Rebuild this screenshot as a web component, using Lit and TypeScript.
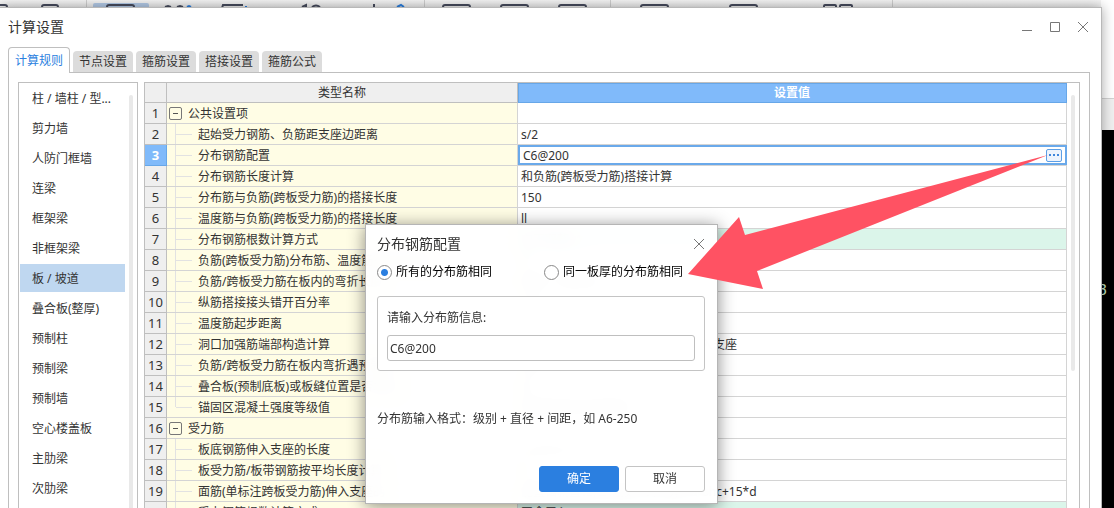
import { LitElement, html, css, svg } from "lit";
import { customElement } from "lit/decorators.js";
import { classMap } from "lit/directives/class-map.js";

type Row = { name: string; value?: string; group?: boolean; formula?: boolean; last?: boolean };

const TABS = ["计算规则", "节点设置", "箍筋设置", "搭接设置", "箍筋公式"];

const MEMBERS = [
  "柱 / 墙柱 / 型...", "剪力墙", "人防门框墙", "连梁", "框架梁", "非框架梁", "板 / 坡道",
  "叠合板(整厚)", "预制柱", "预制梁", "预制墙", "空心楼盖板", "主肋梁", "次肋梁",
];

const ROWS: Row[] = [
  { name: "公共设置项", group: true },
  { name: "起始受力钢筋、负筋距支座边距离", value: "s/2" },
  { name: "分布钢筋配置", value: "C6@200" },
  { name: "分布钢筋长度计算", value: "和负筋(跨板受力筋)搭接计算" },
  { name: "分布筋与负筋(跨板受力筋)的搭接长度", value: "150" },
  { name: "温度筋与负筋(跨板受力筋)的搭接长度", value: "ll" },
  { name: "分布钢筋根数计算方式", value: "向下取整+1", formula: true },
  { name: "负筋(跨板受力筋)分布筋、温度筋是否带弯勾", value: "否" },
  { name: "负筋/跨板受力筋在板内的弯折长度", value: "板厚-2*保护层" },
  { name: "纵筋搭接接头错开百分率", value: "50%" },
  { name: "温度筋起步距离", value: "s" },
  { name: "洞口加强筋端部构造计算", value: "平行于受力方向的洞口加强筋应伸入支座" },
  { name: "负筋/跨板受力筋在板内弯折遇预制板", value: "弯折" },
  { name: "叠合板(预制底板)或板缝位置是否增加", value: "是" },
  { name: "锚固区混凝土强度等级值", value: "取锚固区构件强度值", last: true },
  { name: "受力筋", group: true },
  { name: "板底钢筋伸入支座的长度", value: "max(ha/2,5*d)" },
  { name: "板受力筋/板带钢筋按平均长度计算", value: "否" },
  { name: "面筋(单标注跨板受力筋)伸入支座的", value: "能直锚就直锚,否则按公式计算:ha-bhc+15*d" },
  { name: "受力钢筋根数计算方式", value: "四舍五入+1", formula: true },
];

@customElement("app-root")
export class AppRoot extends LitElement {
  static styles = css`
    :host {
      display: block;
      position: relative;
      height: 100vh;
      overflow: hidden;
      background: #000;
      color: #333;
      font: 12px/20px "Noto Sans", "Noto Sans CJK SC", sans-serif;
    }
    * { box-sizing: border-box; }
    button, input { font: inherit; color: inherit; margin: 0; }
    .backdrop { position: absolute; inset: 0; display: flex; flex-direction: column; }
    .ribbon { height: 98px; background: linear-gradient(to right, transparent 1101px, #fff 1101px), linear-gradient(#f6f6f6, #eee 7px); }
    .ribbon svg { display: block; }
    .strip { height: 32px; border-top: 1px solid #d2d2d2; background: #f0f0f0; }
    .canvas { flex: 1; display: flex; justify-content: flex-end; align-items: center; padding: 0 7px 56px 0; color: #c4e4c4; font: 16px/20px "Liberation Mono", monospace; }
    .window {
      position: relative;
      height: calc(100vh - 7px + 40px);
      margin: 7px 12px 0 0;
      display: flex;
      flex-direction: column;
      background: #fff;
      border-top: 1px solid #b8b8b8;
      border-right: 1px solid #b8b8b8;
      box-shadow: 0 0 12px rgba(0, 0, 0, .35);
    }
    .titlebar { display: flex; justify-content: space-between; align-items: center; height: 38px; padding: 0 12px 0 8px; font-size: 14px; }
    h1, h2 { margin: 0; font-size: 14px; font-weight: 400; line-height: 20px; }
    .controls { display: flex; gap: 16px; }
    .icon { display: block; padding: 0; border: 0; background: none; width: 12px; height: 12px; }
    .icon svg { display: block; fill: none; stroke: #777; }
    .tabs { display: flex; align-items: flex-end; gap: 3px; height: 26px; padding-left: 8px; margin-top: 1px; position: relative; z-index: 1; margin-bottom: -1px; }
    .tab { height: 21px; width: 60px; margin-bottom: 1px; padding: 0; border: 0; border-radius: 4px 4px 0 0; background: #dcdcdc; line-height: 21px; white-space: nowrap; }
    .tab.active { width: 62px; height: 26px; margin-bottom: 0; border: 1px solid #bfbfbf; border-bottom: 0; background: #fff; color: #2b7fe0; }
    .panel { flex: 1; min-height: 0; display: flex; gap: 6px; margin: 0 11px 0 8px; padding: 9px 9px 0; border: 1px solid #bfbfbf; border-bottom: 0; }
    .members { width: 120px; display: flex; justify-content: space-between; border: 1px solid #bfbfbf; padding: 1px 4px 0 1px; }
    .list { list-style: none; margin: 0; padding: 0; width: 105px; }
    .list li { height: 28px; margin-bottom: 2px; padding-left: 12px; line-height: 30px; white-space: nowrap; }
    .list li.on { background: #bfd7f0; }
    .bar { width: 4px; margin-top: 11px; border-radius: 2px; background: #e9e9e9; }
    .bar.short { height: 276px; margin-top: 12px; }
    .grid { flex: 1; min-width: 0; display: flex; justify-content: space-between; align-items: flex-start; border: 1px solid #bfbfbf; padding-right: 4px; }
    table { width: calc(100% - 8px); border-collapse: separate; border-spacing: 0; table-layout: fixed; }
    .c-num { width: 22px; }
    .c-name { width: 351px; }
    th, td { height: 21px; padding: 0; border-right: 1px solid #d4d4d4; border-bottom: 1px solid #d4d4d4; font-weight: 400; line-height: 20px; overflow: hidden; white-space: nowrap; }
    thead th { height: 20px; padding-top: 1px; line-height: 18px; background: #efefef; border-color: #bfbfbf; }
    thead th.hot { background: #80bafa; border-color: #67a7e8; box-shadow: inset 1px 1px #67a7e8; color: #fff; font-weight: 700; }
    tbody th { background: #efefef; border-color: #bfbfbf; font-size: 13px; }
    tbody th.hot { background: #80bafa; border-color: #67a7e8; color: #fff; font-weight: 700; }
    .name { background: #fffde5; }
    .cell { display: flex; align-items: center; height: 20px; }
    .text { display: block; padding-top: 2px; line-height: 18px; }
    .group { padding-left: 2px; gap: 6px; }
    .fold { width: 13px; height: 13px; padding: 0; border: 1px solid #777; border-radius: 2px; background: #fffde5; display: grid; place-items: center; }
    .fold::before { content: ""; width: 5px; height: 1px; background: #555; }
    .branch { width: 17px; height: 20px; margin: 0 6px 0 8px; border-left: 1px solid #e2e2e2; background: linear-gradient(#e2e2e2, #e2e2e2) 0 10px / 100% 1px no-repeat; }
    .branch.last { border-image: linear-gradient(#e2e2e2 50%, transparent 50%) 1; }
    .value { padding-left: 3px; }
    .value.formula { background: #dbf5ea; }
    .value.edit { padding: 0 5px; border-right: 0; box-shadow: inset 0 0 0 2px #6aa9ea; }
    .value.edit .cell { justify-content: space-between; }
    .more { width: 16px; height: 13px; padding: 0; border: 1px solid #5c9fe6; border-radius: 2px; background: #edf3fc; display: flex; align-items: center; justify-content: center; gap: 2px; }
    .more i { width: 2px; height: 2px; background: #3f86dc; }
    .dialog {
      position: absolute;
      left: 365px;
      top: 224px;
      width: 353px;
      padding: 9px 12px 11px 11px;
      border: 1px solid #b5b5b5;
      background: rgba(255, 255, 255, .97);
      backdrop-filter: blur(8px);
      box-shadow: 0 2px 16px rgba(0, 0, 0, .45);
    }
    .dialog header { display: flex; justify-content: space-between; align-items: center; height: 20px; }
    .radios { display: grid; grid-template-columns: 167px 1fr; margin-top: 8px; color: #000; }
    .radios label { display: flex; align-items: center; gap: 4px; white-space: nowrap; }
    .radios input { appearance: none; width: 15px; height: 15px; border: 1px solid #888; border-radius: 50%; background: #fff; }
    .radios input:checked { background: radial-gradient(circle, #2b7fe0 3px, #fff 4px); }
    .box { margin-top: 14px; padding: 11px 9px 9px; border: 1px solid #c4c4c4; border-radius: 3px; background: #fff; }
    .box label { display: block; }
    .box input { display: block; width: 100%; height: 26px; margin-top: 7px; padding: 0 2px; border: 1px solid #bfbfbf; border-radius: 3px; background: #fff; }
    .hint { margin: 38px 0 37px; }
    .actions { display: flex; justify-content: flex-end; gap: 6px; }
    .btn { width: 80px; height: 26px; padding: 0; border: 1px solid #c4c4c4; border-radius: 3px; background: #fff; }
    .btn.primary { border-color: #2b7fe0; background: #2b7fe0; color: #fff; }
    .arrow { position: absolute; left: 688px; top: 155px; pointer-events: none; }
  `;

  private ribbonIcons() {
    const boxes = [-20, 42, 107, 443, 501, 559, 641, 730];
    return svg`<svg width="1101" height="7">
      <rect x="93" y="3" width="56" height="8" rx="2" fill="#b4cbe8"/>
      <g stroke="#cfcfcf">${[86, 424, 610, 892].map((x) => svg`<path d="M${x}.5 0V7"/>`)}</g>
      <g fill="none" stroke="#474c5e" stroke-width="2">
        ${boxes.map((x, i) => svg`<rect x=${x} y="5" width=${i === 1 ? 16 : 27} height="12" rx="2"/>`)}
        <path d="M165 7l3-1 3 1M177 7l3-1 3 1M222 8l1-3h20M302 7l4-2v4M312 7q4-3 8 0M374 4v4"/>
        <rect x="824" y="5" width="12" height="12" rx="1"/><rect x="840" y="5" width="12" height="12" rx="1"/>
      </g>
      <g fill="none" stroke="#2b7fe0" stroke-width="2"><path d="M187 7l2-1 2 1M246 6v3M397 7l4-2 3 2"/></g>
    </svg>`;
  }

  private closeIcon() {
    return html`<button class="icon" aria-label="关闭"><svg width="12" height="12"><path d="M1 1l10 10M11 1L1 11"/></svg></button>`;
  }

  private row(r: Row, i: number) {
    const hot = i === 2;
    return html`<tr>
      <th scope="row" class=${classMap({ hot })}>${i + 1}</th>
      <td class="name">
        <div class=${classMap({ cell: true, group: !!r.group })}>
          ${r.group
            ? html`<button class="fold" aria-label="折叠"></button>`
            : html`<span class=${classMap({ branch: true, last: !!r.last })}></span>`}
          <span class="text">${r.name}</span>
        </div>
      </td>
      <td class=${classMap({ value: true, formula: !!r.formula, edit: hot })}>
        <div class="cell">
          <span class="text">${r.value ?? ""}</span>
          ${hot ? html`<button class="more" aria-label="更多"><i></i><i></i><i></i></button>` : ""}
        </div>
      </td>
    </tr>`;
  }

  render() {
    return html`
      <div class="backdrop">
        <div class="ribbon">${this.ribbonIcons()}</div>
        <div class="strip"></div>
        <div class="canvas">8</div>
      </div>
      <section class="window">
        <header class="titlebar">
          <h1>计算设置</h1>
          <div class="controls">
            <button class="icon" aria-label="最小化"><svg width="12" height="12"><path d="M1 9.5h10"/></svg></button>
            <button class="icon" aria-label="最大化"><svg width="12" height="12"><path d="M1.500 1.500h9v9h-9z"/></svg></button>
            ${this.closeIcon()}
          </div>
        </header>
        <nav class="tabs">
          ${TABS.map((t, i) => html`<button class=${classMap({ tab: true, active: i === 0 })}>${t}</button>`)}
        </nav>
        <main class="panel">
          <aside class="members">
            <ul class="list">${MEMBERS.map((m, i) => html`<li class=${classMap({ on: i === 6 })}>${m}</li>`)}</ul>
            <div class="bar"></div>
          </aside>
          <div class="grid">
            <table>
              <colgroup><col class="c-num"><col class="c-name"><col></colgroup>
              <thead><tr><th></th><th>类型名称</th><th class="hot">设置值</th></tr></thead>
              <tbody>${ROWS.map((r, i) => this.row(r, i))}</tbody>
            </table>
            <div class="bar short"></div>
          </div>
        </main>
      </section>
      <section class="dialog" role="dialog" aria-label="分布钢筋配置">
        <header><h2>分布钢筋配置</h2>${this.closeIcon()}</header>
        <div class="radios">
          <label><input type="radio" name="mode" checked>所有的分布筋相同</label>
          <label><input type="radio" name="mode">同一板厚的分布筋相同</label>
        </div>
        <div class="box">
          <label for="info">请输入分布筋信息:</label>
          <input id="info" type="text" value="C6@200">
        </div>
        <p class="hint">分布筋输入格式：级别 + 直径 + 间距，如 A6-250</p>
        <div class="actions">
          <button class="btn primary">确定</button>
          <button class="btn">取消</button>
        </div>
      </section>
      <svg class="arrow" width="362" height="136"><path fill="#ff5263" d="M0 119L51 62L57 80L360 0L69 116L75 134Z"/></svg>
    `;
  }
}
